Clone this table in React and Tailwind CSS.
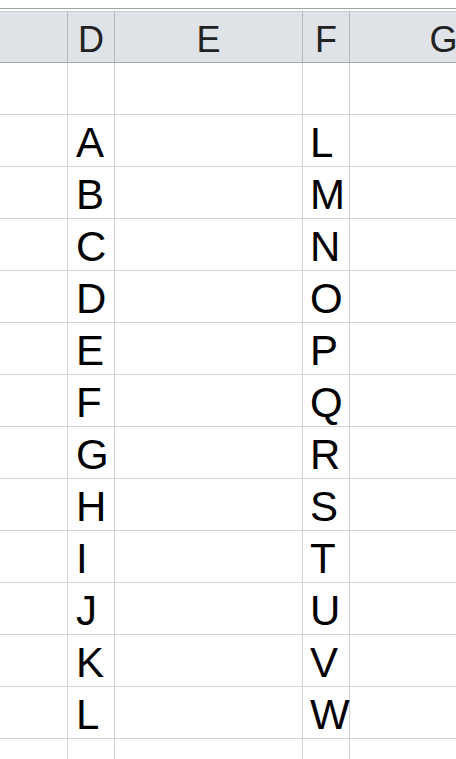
import React from "react";

const colD = ["", "A", "B", "C", "D", "E", "F", "G", "H", "I", "J", "K", "L", ""];
const colF = ["", "L", "M", "N", "O", "P", "Q", "R", "S", "T", "U", "V", "W", ""];

const App = () => {
  return (
    <div className="w-[456px] h-[759px] overflow-hidden bg-white font-['Liberation_Sans',Arial,sans-serif]">
      <div className="h-2" />
      <div className="h-px bg-[#a3a3a3]" />
      <div className="h-[2px]" />

      {/* column header */}
      <div className="flex h-[52px] border-t border-b border-t-[#c9cdd2] border-b-[#a4a9ae] bg-[#dfe3e8] text-[36px] leading-[36px] text-[#222]">
        <div className="w-[68px] shrink-0 border-r border-[#b4b8bd]" />
        <div className="w-[47px] shrink-0 border-r border-[#b4b8bd] pt-[10px] text-center">D</div>
        <div className="w-[188px] shrink-0 border-r border-[#b4b8bd] pt-[10px] text-center">E</div>
        <div className="w-[47px] shrink-0 border-r border-[#b4b8bd] pt-[10px] text-center">F</div>
        <div className="w-[188px] shrink-0 border-r border-[#b4b8bd] pt-[10px] text-center">G</div>
      </div>

      {/* rows */}
      {colD.map((d, i) => (
        <div key={i} className="flex h-[52px] shrink-0 border-b border-[#d4d4d4] text-[42px] leading-[42px] text-black">
          <div className="w-[68px] shrink-0 border-r border-[#d4d4d4]" />
          <div className="w-[47px] shrink-0 border-r border-[#d4d4d4] pl-2 pt-[7px] whitespace-nowrap">{d}</div>
          <div className="w-[188px] shrink-0 border-r border-[#d4d4d4]" />
          <div className="relative w-[47px] shrink-0 border-r border-[#d4d4d4] pl-[7px] pt-[7px] whitespace-nowrap">{colF[i]}</div>
          <div className="w-[188px] shrink-0 border-r border-[#d4d4d4]" />
        </div>
      ))}
    </div>
  );
};

export default App;
